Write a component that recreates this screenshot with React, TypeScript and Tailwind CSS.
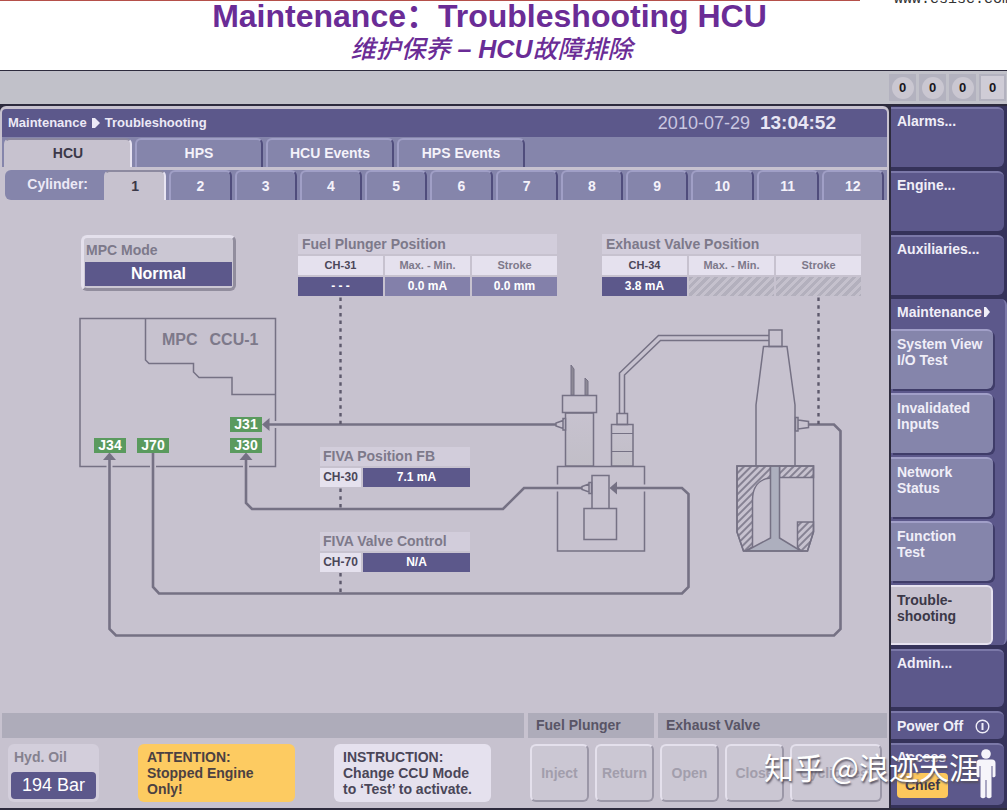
import { useState } from 'react';
import type { ReactNode } from 'react';
import clsx from 'clsx';

const mainTabs = ['HCU', 'HPS', 'HCU Events', 'HPS Events'];
const cylinders = [1, 2, 3, 4, 5, 6, 7, 8, 9, 10, 11, 12];
const subMenu = [
  ['System View', 'I/O Test'],
  ['Invalidated', 'Inputs'],
  ['Network', 'Status'],
  ['Function', 'Test'],
  ['Trouble-', 'shooting'],
];
const fuelCommands = ['Inject', 'Return'];
const valveCommands = ['Open', 'Close'];

function SlideHeader() {
  return (
    <header className="h-[70px] overflow-hidden bg-white text-center text-[#6a2c96]">
      <div className="flex h-2 items-end justify-between overflow-hidden">
        <div className="w-[860px] self-start border-t border-[#b5504a]" />
        <span className="mr-[-4px] font-['Liberation_Mono',monospace] text-[15px] leading-4 text-[#333]">www.csisc.com</span>
      </div>
      <h1 className="mt-[-10px] pr-7 font-['Liberation_Sans','Noto_Sans_CJK_SC',sans-serif] text-[32px] leading-9 font-bold">
        Maintenance：Troubleshooting HCU
      </h1>
      <p className="pr-6 font-['Liberation_Sans','Noto_Sans_CJK_SC',sans-serif] text-[25px] leading-[30px] font-medium italic">
        维护保养 <b>– HCU</b>故障排除
      </p>
    </header>
  );
}

function AlarmCounters() {
  return (
    <div className="flex h-[33px] items-center justify-end gap-[3px] bg-[#c1c1c9] pr-px text-[13px] font-bold text-[#17161c]">
      {[0, 1, 2].map((n) => (
        <div key={n} className="grid size-[27px] place-items-center bg-[#b3b2bf]">
          <span className="grid size-[22px] place-items-center rounded-full bg-[#cac7d1]">0</span>
        </div>
      ))}
      <div className="grid size-[27px] place-items-center border-2 border-[#b3b2bf] bg-[#cfccd6]">0</div>
    </div>
  );
}

function Tab({ active, className, onClick, children }: { active: boolean; className?: string; onClick: () => void; children: ReactNode }) {
  return (
    <button
      type="button"
      role="tab"
      aria-selected={active}
      onClick={onClick}
      className={clsx(
        'rounded-t-md border-t-2 border-r-2 border-l-2 text-center font-bold',
        active
          ? 'border-t-[#8d8aa0] border-r-[#e8e4f2] border-l-[#c7c2cf] bg-[#c7c2cf] text-[#3b3848]'
          : 'border-t-[#a09fc6] border-r-[#504d7c] border-l-[#a09fc6] bg-[#8585ab] text-[#f4f2fa]',
        className
      )}
    >
      {children}
    </button>
  );
}

function Readout({ title, heads, values, className }: { title: string; heads: string[]; values: string[]; className: string }) {
  return (
    <table className={clsx('absolute w-[263px] table-fixed border-separate border-spacing-[2px] text-center text-[12px]', className)}>
      <thead>
        <tr className="h-5">
          <th colSpan={3} className="bg-[#d2cddb] p-0 pl-1 text-left text-[14px] leading-5 font-bold text-[#7d798a]">{title}</th>
        </tr>
        <tr className="h-[19px]">
          {heads.map((h, i) => (
            <th key={h} className={clsx('bg-[#e5e1ee] p-0 text-[11px] leading-[19px] font-bold', i === 0 ? 'text-[#4b4759]' : 'text-[#7d798a]')}>{h}</th>
          ))}
        </tr>
      </thead>
      <tbody>
        <tr className="h-[19px]">
          {values.map((v, i) => (
            <td
              key={i}
              className={clsx(
                'p-0 leading-[19px] font-bold text-white',
                i === 0 && 'bg-[#5c588b]',
                i > 0 && v && 'bg-[#8380aa]',
                !v && 'bg-[repeating-linear-gradient(135deg,#b3b0bd_0px,#b3b0bd_3px,#c5c1cd_3px,#c5c1cd_6px)]'
              )}
            >
              {v}
            </td>
          ))}
        </tr>
      </tbody>
    </table>
  );
}

function Signal({ title, channel, value, className }: { title: string; channel: string; value: string; className: string }) {
  return (
    <table className={clsx('absolute w-[154px] table-fixed border-separate border-spacing-[2px] text-center text-[12px]', className)}>
      <colgroup>
        <col className="w-[41px]" />
        <col />
      </colgroup>
      <tbody>
        <tr className="h-[19px]">
          <th colSpan={2} className="bg-[#d2cddb] p-0 pl-[3px] text-left text-[14px] leading-[19px] font-bold text-[#7d798a]">{title}</th>
        </tr>
        <tr className="h-[19px]">
          <th className="bg-[#e5e1ee] p-0 leading-[19px] font-bold text-[#4b4759]">{channel}</th>
          <td className="bg-[#5c588b] p-0 leading-[19px] font-bold text-white">{value}</td>
        </tr>
      </tbody>
    </table>
  );
}

function Plug({ children, className }: { children: ReactNode; className: string }) {
  return (
    <span className={clsx('absolute h-[15px] w-8 bg-[#5a9a5e] text-center text-[14px] leading-[15px] font-bold text-white', className)}>
      {children}
    </span>
  );
}

function HydraulicDrawing() {
  return (
    <svg viewBox="0 200 888 512" className="absolute inset-0 size-full" fill="none" stroke="#757184" strokeWidth="1.5">
      <defs>
        <pattern id="hatch" width="5" height="5" patternUnits="userSpaceOnUse" patternTransform="rotate(45)">
          <path d="M1 0V5" stroke="#757184" strokeWidth="1.6" />
        </pattern>
        <linearGradient id="shade" x1="0" y1="0" x2="0" y2="1">
          <stop offset="0" stopColor="#c7c2cf" />
          <stop offset="1" stopColor="#c1bec7" />
        </linearGradient>
      </defs>

      {/* control unit cabinet */}
      <path d="M80 318.5H275.5V466.5H80Z" />
      <path d="M145.5 318.5V360L149 363.5H193.5V372L199 377.5H232V394.5H275.5" />

      {/* pump block */}
      <path d="M557.5 466.5H644.5V551H557.5Z" />
      <path d="M565.5 413H593.5V466H565.5Z" fill="url(#shade)" />
      <path d="M562.5 395.5H596.5V412.5H562.5Z" />
      <path d="M571 395V365L574 369V395ZM585 395V378L588 381V395Z" fill="#8d8996" strokeWidth="1" />
      <path d="M611.5 424.5H633V466H611.5Z" fill="url(#shade)" />
      <path d="M611.5 433.5H633M611.5 451.5H633" strokeWidth="1.2" />
      <path d="M617 413.5H627.5V424.5H617Z" />
      <path d="M619.5 413.5V373L658.5 335.5H769M624.5 413.5V375L660.5 340.5H769" />

      {/* exhaust valve */}
      <path d="M769 330H782V346.5H769Z" />
      <path d="M756 466V405L763.5 346.5H787L795 405V466" />
      <path d="M737 466H770.5V478C758 479 752.5 488 752.5 500V547L746 551H743.5L737 532Z" fill="url(#hatch)" />
      <path d="M779.5 466H813.5V477.5H779.5Z" fill="url(#hatch)" />
      <path d="M797.5 522H813.5V532L807.5 551H801L797.5 547Z" fill="url(#hatch)" />
      <path d="M770.5 466V538L746 551H801L779.5 538V466Z" fill="#adafbe" />
      <path d="M737 466H813.5V532L807.5 551H743.5L737 532Z" />

      {/* cable breaks in the outlines */}
      <path d="M272 424.5H279M554 488H561M641 488H648" stroke="#c7c2cf" strokeWidth="7" />
      <path d="M109.5 463V470M153 463V470M246 463V470" stroke="#c7c2cf" strokeWidth="6" />

      {/* cables */}
      <g strokeWidth="2.6">
        <path d="M268 424.5H557" />
        <path d="M109.5 458V629L116 635.5H834L840.5 629V431L834 424.5H808" />
        <path d="M153 453V587L159 593.5H682L688.5 587V494L682 488H616" />
        <path d="M246 458V503L252 509H503L524 488H582" />
      </g>
      <g fill="#757184" stroke="none">
        <path d="M262 424.5L269.5 418V431Z" />
        <path d="M109.5 452.5L116 460H103Z" />
        <path d="M246 452.5L252.5 460H239.5Z" />
        <path d="M609.5 488L617 481.5V494.5Z" />
      </g>

      {/* servo valve and the sensor heads */}
      <path d="M592 475.5H609V508.5H592ZM584 508.5H616.5V539.5H584Z" />
      <g fill="#c7c2cf">
        <path d="M563 420.5L556 423V426L563 428.5ZM563 418.5H565.5V430H563Z" />
        <path d="M589 484L582 486.5V489.5L589 492ZM589 482.5H591.5V493.5H589Z" />
        <path d="M798 420L808.5 421.5V427.5L798 429ZM795.5 417.5H798V431H795.5Z" />
      </g>

      <g stroke="#5d596c" strokeWidth="2.4" strokeDasharray="3.5 4.2">
        <path d="M340.5 297.5V424" />
        <path d="M818.5 297.5V424" />
        <path d="M340.5 488.5V509" />
        <path d="M340.5 573V593" />
      </g>
    </svg>
  );
}

function SideButton({ children, className }: { children: ReactNode; className?: string }) {
  return (
    <button
      type="button"
      className={clsx('mr-[3px] flex rounded-r-md border-t-2 border-t-[#7b78a8] bg-[#5c588b] px-[6px] text-left text-[14px] leading-4 font-bold text-[#f0eef8]', className)}
    >
      {children}
    </button>
  );
}

function Sidebar() {
  return (
    <nav className="flex w-[116px] shrink-0 flex-col gap-1 bg-[#35325a] pt-px">
      {['Alarms...', 'Engine...', 'Auxiliaries...'].map((t) => (
        <SideButton key={t} className="h-[60px] items-start pt-1">{t}</SideButton>
      ))}
      <div className="flex flex-col gap-1 rounded-r-md border-r-2 border-r-[#7b78a8] bg-[#5c588b] text-[14px] font-bold text-[#f0eef8]">
        <div className="flex h-[26px] items-center gap-px pl-[6px] leading-4">
          Maintenance
          <svg width="8" height="12" viewBox="0 0 8 12" fill="currentColor"><path d="M1 1H3L7 6L3 11H1Z" /></svg>
        </div>
        {subMenu.map(([first, second], i) => (
          <button
            key={first}
            type="button"
            className={clsx(
              'mr-3 flex h-[60px] items-start rounded-r-md border-t-2 pt-[5px] pl-[6px] text-left leading-4 whitespace-nowrap',
              i === 4
                ? 'border-r-2 border-b-2 border-[#e6e2f0] bg-[#c7c2cf] text-[#3b3848]'
                : 'border-t-[#a19fc8] bg-[#8585ab] shadow-[2px_2px_0_#3f3c69]'
            )}
          >
            <span>
              {first}
              <br />
              {second}
            </span>
          </button>
        ))}
      </div>
      <SideButton className="h-[58px] items-start pt-1">Admin...</SideButton>
      <SideButton className="h-7 items-center justify-between pr-[14px]">
        Power Off
        <svg width="15" height="15" viewBox="0 0 15 15" fill="none" stroke="currentColor"><circle cx="7.5" cy="7.5" r="6.3" strokeWidth="1.4" /><path d="M7.5 4V11" strokeWidth="2" /></svg>
      </SideButton>
      <SideButton className="mb-[3px] flex-1 items-start justify-between pt-1 pr-2">
        <span className="flex flex-col items-start gap-2">
          Access
          <span className="w-[51px] rounded-sm bg-[#fdc85c] text-center leading-[25px] text-[#3f3848]">Chief</span>
        </span>
        <svg width="20" height="50" viewBox="0 0 20 50" fill="#f6f5fa" className="relative z-20">
          <circle cx="10" cy="5" r="4.8" />
          <path d="M4 10.5H16Q19.500 10.5 19.500 14V27Q18.500 29 16.500 28V17H15.500V48Q13 50.500 10.500 48V31H9.500V48Q7 50.500 4.500 48V17H3.500V28Q1.500 29 .5 27V14Q.5 10.500 4 10.500Z" />
        </svg>
      </SideButton>
    </nav>
  );
}

function CommandButton({ children, className }: { children: ReactNode; className: string }) {
  return (
    <button
      type="button"
      disabled
      className={clsx('h-[58px] rounded-md border-2 border-t-[#e4e0ec] border-r-[#9b97a7] border-b-[#9b97a7] border-l-[#e4e0ec] bg-[#cbc7d3] text-center text-[14px] font-bold text-[#a29eac]', className)}
    >
      {children}
    </button>
  );
}

function BottomBar() {
  return (
    <footer>
      <div className="mx-[2px] flex h-[25px] gap-1 text-[14px] leading-[25px] font-bold text-[#595566]">
        <div className="flex-1 bg-[#aeacba]" />
        <div className="w-[126px] bg-[#aeacba] pl-2">Fuel Plunger</div>
        <div className="w-[229px] bg-[#aeacba] pl-2">Exhaust Valve</div>
      </div>
      <div className="relative mt-[6px] flex items-start pr-[7px] pb-[6px] pl-2">
        <div className="h-[58px] w-[91px] rounded-md bg-[#d3cedb] px-[3px] pt-1 text-[14px]">
          <p className="pl-[3px] leading-[18px] font-bold text-[#85818f]">Hyd. Oil</p>
          <p className="mt-[6px] rounded-sm bg-[#5c588b] text-center text-[18px] leading-[27px] text-white">194 Bar</p>
        </div>
        <p className="ml-[39px] h-[58px] w-[157px] rounded-md bg-[#fdcb61] pt-[5px] pl-[9px] text-[14px] leading-4 font-bold text-[#4c4142]">
          ATTENTION:<br />Stopped Engine<br />Only!
        </p>
        <p className="ml-[39px] h-[58px] w-[157px] rounded-md bg-[#e5e1ee] pt-[5px] pl-[9px] text-[14px] leading-4 font-bold text-[#4a4658]">
          INSTRUCTION:<br />Change CCU Mode<br />to ‘Test’ to activate.
        </p>
        <div className="ml-auto flex gap-[6px]">
          {[...fuelCommands, ...valveCommands].map((c) => (
            <CommandButton key={c} className="w-[59px]">{c}</CommandButton>
          ))}
          <CommandButton className="w-[92px]">Cyclic Test</CommandButton>
        </div>
        <span className="pointer-events-none absolute top-0 right-[-90px] z-10 font-['Noto_Sans_CJK_SC',sans-serif] text-[30px] leading-[44px] whitespace-nowrap text-white [text-shadow:1px_2px_2px_#55515f]">
          知乎 @浪迹天涯
        </span>
      </div>
    </footer>
  );
}

export default function App() {
  const [tab, setTab] = useState('HCU');
  const [cylinder, setCylinder] = useState(1);

  return (
    <div className="min-h-screen overflow-hidden bg-[#2d2b3d] font-['Liberation_Sans',Arial,sans-serif]">
      <SlideHeader />
      <div className="border-t border-[#2d2b3d]">
        <AlarmCounters />
        <div className="mt-[2px] flex">
          <main className="mr-[2px] min-w-0 flex-1 rounded-t-md bg-[#c7c2cf] pt-[3px]">
            <div className="mx-[2px] flex h-[28px] items-center justify-between rounded-t-sm bg-[#5c588b] pr-[51px] pl-[6px] text-[#ece9f6]">
              <h2 className="flex items-center gap-[5px] text-[13px] font-bold">
                Maintenance
                <svg width="8" height="12" viewBox="0 0 8 12" fill="currentColor"><path d="M0 1H3L8 6L3 11H0Z" /></svg>
                Troubleshooting
              </h2>
              <p className="flex items-center gap-[10px] text-[18px] text-[#c9c6e0]">
                2010-07-29 <b className="text-[19px] text-[#e8e6f4]">13:04:52</b>
              </p>
            </div>
            <div role="tablist" className="mx-[2px] flex h-[30px] gap-[3px] bg-[#8585ab] pt-px pl-[2px] text-[14px]">
              {mainTabs.map((t) => (
                <Tab key={t} active={t === tab} onClick={() => setTab(t)} className="w-32">{t}</Tab>
              ))}
            </div>
            <div role="tablist" className="mt-[3px] mr-[2px] ml-[5px] flex h-[30px] rounded-l-md bg-[#8585ab] pr-[3px] text-[14px]">
              <span className="w-[99px] shrink-0 pr-4 text-right leading-[28px] font-bold text-[#ece9f6]">Cylinder:</span>
              <div className="flex flex-1 gap-[3px]">
                {cylinders.map((c) => (
                  <Tab key={c} active={c === cylinder} onClick={() => setCylinder(c)} className="flex-1">{c}</Tab>
                ))}
              </div>
            </div>

            <div className="h-[513px]">
              <div className="relative h-[512px] w-[888px]">
                <HydraulicDrawing />
                <button type="button" className="absolute top-[35px] left-[81px] h-[56px] w-[155px] rounded-md border-[3px] border-t-[#e4e0ec] border-r-[#918d9d] border-b-[#918d9d] border-l-[#e4e0ec] bg-[#cbc7d3] text-[14px] font-bold">
                  <span className="block pl-[2px] text-left leading-[18px] text-[#7d798a]">MPC Mode</span>
                  <span className="mx-px mt-[3px] block bg-[#5c588b] text-[16px] leading-6 text-white">Normal</span>
                </button>
                <span className="absolute top-[130px] left-[162px] flex gap-3 text-[16px] leading-5 font-bold text-[#7d798a]">
                  <span>MPC</span>
                  <span>CCU-1</span>
                </span>
                <Readout title="Fuel Plunger Position" heads={['CH-31', 'Max. - Min.', 'Stroke']} values={['- - -', '0.0 mA', '0.0 mm']} className="top-[32px] left-[296px]" />
                <Readout title="Exhaust Valve Position" heads={['CH-34', 'Max. - Min.', 'Stroke']} values={['3.8 mA', '', '']} className="top-[32px] left-[600px]" />
                <Signal title="FIVA Position FB" channel="CH-30" value="7.1 mA" className="top-[245px] left-[318px]" />
                <Signal title="FIVA Valve Control" channel="CH-70" value="N/A" className="top-[330px] left-[318px]" />
                <Plug className="top-[217px] left-[230px]">J31</Plug>
                <Plug className="top-[238px] left-[230px]">J30</Plug>
                <Plug className="top-[238px] left-[94px]">J34</Plug>
                <Plug className="top-[238px] left-[137px]">J70</Plug>
              </div>
            </div>
            <BottomBar />
          </main>
          <Sidebar />
        </div>
      </div>
    </div>
  );
}
